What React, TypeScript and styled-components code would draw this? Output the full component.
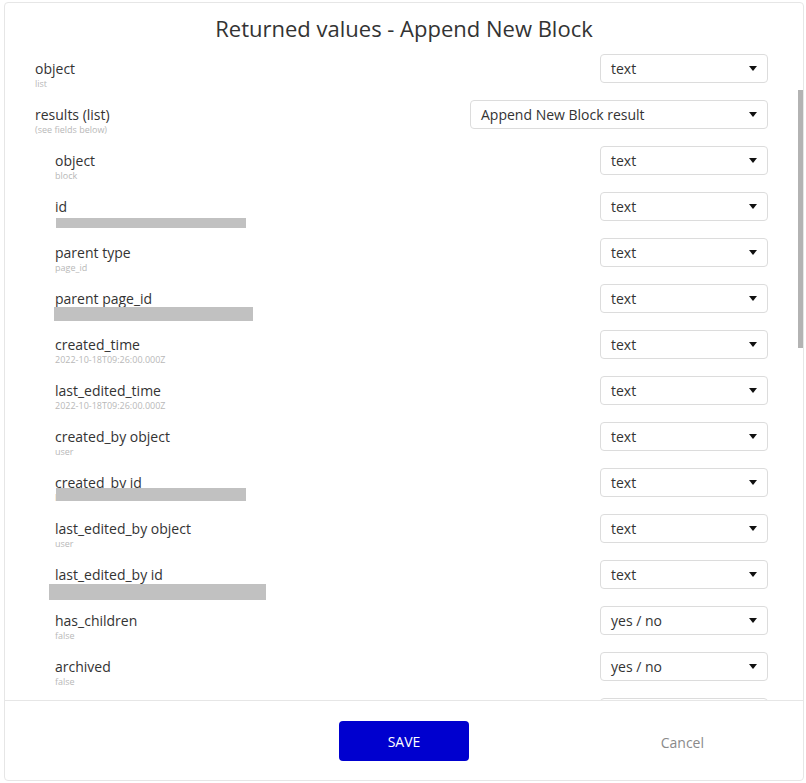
import * as React from 'react';
import styled, { createGlobalStyle } from 'styled-components';

const GlobalStyle = createGlobalStyle`
  html, body {
    margin: 0;
    padding: 0;
    background: #ffffff;
  }
  body {
    font-family: 'Open Sans', 'Noto Sans', sans-serif;
    color: #333333;
  }
`;

type Redaction = { x: number; y: number; w: number; h: number };

type Field = {
  label: string;
  sub?: string;
  type: string;
  nested?: boolean;
  wide?: boolean;
  redact?: Redaction;
};

const fields: Field[] = [
  { label: 'object', sub: 'list', type: 'text' },
  { label: 'results (list)', sub: '(see fields below)', type: 'Append New Block result', wide: true },
  { label: 'object', sub: 'block', type: 'text', nested: true },
  { label: 'id', type: 'text', nested: true, redact: { x: 21, y: 26, w: 190, h: 10 } },
  { label: 'parent type', sub: 'page_id', type: 'text', nested: true },
  { label: 'parent page_id', type: 'text', nested: true, redact: { x: 19, y: 23, w: 199, h: 14 } },
  { label: 'created_time', sub: '2022-10-18T09:26:00.000Z', type: 'text', nested: true },
  { label: 'last_edited_time', sub: '2022-10-18T09:26:00.000Z', type: 'text', nested: true },
  { label: 'created_by object', sub: 'user', type: 'text', nested: true },
  { label: 'created_by id', sub: 'b', type: 'text', nested: true, redact: { x: 21, y: 20, w: 190, h: 13 } },
  { label: 'last_edited_by object', sub: 'user', type: 'text', nested: true },
  { label: 'last_edited_by id', type: 'text', nested: true, redact: { x: 14, y: 24, w: 217, h: 16 } },
  { label: 'has_children', sub: 'false', type: 'yes / no', nested: true },
  { label: 'archived', sub: 'false', type: 'yes / no', nested: true },
  // next row is scrolled under the footer, only its select's top edge shows
  { label: '', type: '', nested: true },
];

export default function App() {
  return (
    <>
      <GlobalStyle />
      <Modal>
        <Header>Returned values - Append New Block</Header>
        <Body>
          <List>
            {fields.map((f, i) => (
              <Row key={i} $nested={!!f.nested}>
                <LabelBlock>
                  {f.label && <Label>{f.label}</Label>}
                  {f.sub && <SubLabel>{f.sub}</SubLabel>}
                </LabelBlock>
                <Select $wide={!!f.wide}>
                  <span>{f.type}</span>
                  <Caret />
                </Select>
                {f.redact && (
                  <Redact $x={f.redact.x} $y={f.redact.y} $w={f.redact.w} $h={f.redact.h} />
                )}
              </Row>
            ))}
          </List>
          <ScrollThumb />
        </Body>
        <Footer>
          <SaveButton>SAVE</SaveButton>
          <CancelLink>Cancel</CancelLink>
        </Footer>
      </Modal>
    </>
  );
}

const Modal = styled.div`
  box-sizing: border-box;
  margin: 2px 0 0 4px;
  width: 800px;
  height: 779px;
  border: 1px solid #e6e6e6;
  border-radius: 4px;
  background: #ffffff;
  display: flex;
  flex-direction: column;
  overflow: hidden;
`;

const Header = styled.h1`
  margin: 0;
  padding-top: 10px;
  height: 40px;
  box-sizing: border-box;
  line-height: 30px;
  font-size: 22px;
  font-weight: 400;
  text-align: center;
  color: #333333;
`;

const Body = styled.div`
  position: relative;
  flex: 1;
  overflow: hidden;
`;

const List = styled.div`
  display: flex;
  flex-direction: column;
  gap: 17px;
  padding: 11px 35px 0 30px;
`;

const Row = styled.div<{ $nested: boolean }>`
  position: relative;
  flex: none;
  height: 29px;
  display: flex;
  align-items: flex-start;
  justify-content: space-between;
  padding-left: ${(p) => (p.$nested ? '20px' : '0')};
`;

const LabelBlock = styled.div`
  display: flex;
  flex-direction: column;
  padding-top: 5px;
`;

const Label = styled.div`
  font-size: 14px;
  line-height: 19px;
  color: #333333;
`;

const SubLabel = styled.div`
  font-size: 9px;
  line-height: 11px;
  color: #b8b8b8;
`;

const Select = styled.div<{ $wide: boolean }>`
  box-sizing: border-box;
  flex: none;
  width: ${(p) => (p.$wide ? '298px' : '168px')};
  height: 29px;
  border: 1px solid #dcdcdc;
  border-radius: 4px;
  padding: 0 10px 0 10px;
  display: flex;
  align-items: center;
  justify-content: space-between;
  font-size: 14px;
  color: #333333;
  background: #ffffff;
`;

const Caret = styled.span`
  width: 0;
  height: 0;
  border-left: 4px solid transparent;
  border-right: 4px solid transparent;
  border-top: 5px solid #111111;
`;

const Redact = styled.div<{ $x: number; $y: number; $w: number; $h: number }>`
  position: absolute;
  left: ${(p) => p.$x}px;
  top: ${(p) => p.$y}px;
  width: ${(p) => p.$w}px;
  height: ${(p) => p.$h}px;
  background: #c1c1c1;
`;

const ScrollThumb = styled.div`
  position: absolute;
  right: 0;
  top: 47px;
  width: 5px;
  height: 258px;
  background: #b3b3b3;
`;

const Footer = styled.div`
  height: 80px;
  box-sizing: border-box;
  border-top: 1px solid #e6e6e6;
  display: grid;
  grid-template-columns: 1fr 130px 1fr;
  align-items: center;
`;

const SaveButton = styled.button`
  grid-column: 2;
  width: 130px;
  height: 40px;
  margin-top: 1px;
  border: none;
  border-radius: 4px;
  background: #0000cf;
  color: #ffffff;
  font-family: 'Open Sans', sans-serif;
  font-size: 14px;
  cursor: pointer;
`;

const CancelLink = styled.span`
  grid-column: 3;
  justify-self: end;
  margin: 4px 99px 0 0;
  font-size: 14px;
  color: #8a8a8a;
`;
